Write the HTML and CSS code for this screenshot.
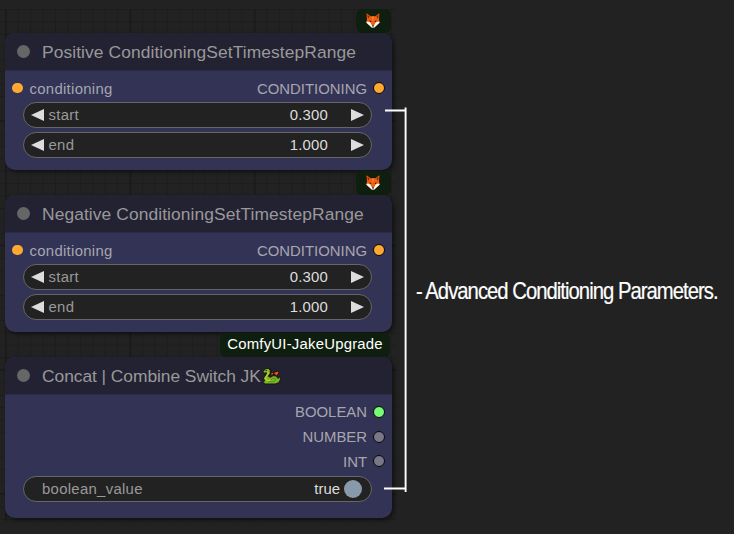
FILE: index.html
```html
<!DOCTYPE html>
<html lang="en">
<head>
<meta charset="utf-8">
<title>Advanced Conditioning Parameters</title>
<link rel="stylesheet" href="styles.css">
</head>
<body>
<svg class="defs" width="0" height="0" aria-hidden="true">
  <symbol id="fox" viewBox="0 0 14 15">
    <path d="M0.5 0.2 L4.6 3.2 H9.4 L13.4 0.2 L13 6.5 L13.8 9.6 L11 12 L8.4 14.6 H5.6 L3 12 L0.2 9.6 L1 6.5Z" fill="#f2600f"/>
    <path d="M1.4 1.8 L3.6 3.5 L2 6Z M12.6 1.8 L10.4 3.5 L12 6Z" fill="#7b2b12"/>
    <path d="M0.2 9.6 L1.8 8.4 L4.4 9.4 L5.6 12 H8.4 L9.6 9.4 L12.2 8.4 L13.8 9.6 L11 12 L8.4 14.6 H5.6 L3 12Z" fill="#fff"/>
    <path d="M3.4 7 L5.6 8.4 L4.3 9Z M10.6 7 L8.4 8.4 L9.7 9Z M5.8 12.3 H8.2 L7 14.2Z" fill="#111"/>
    <path d="M5.8 3.5 H8.2 L7 8Z" fill="#ff8425"/>
  </symbol>
  <symbol id="dragon" viewBox="0 0 18 17">
    <path d="M6 1 L8 1.8 L9 5 L8 8 L10.5 7.5 L11 5.2 L14.5 4 L16.4 5.2 L14.8 7 L13.8 8.6Z" fill="#f0501e" stroke="#111" stroke-width=".8"/>
    <path d="M1 4.2 L3.4 1.6 L6.3 1.3 L7.9 3.3 L7.6 6.3 L5.9 8.7 L8 9.8 L10.5 8.2 L13.5 8.6 L15.1 10.8 L17.3 9 L17.4 12 L15.7 14.9 L12.5 16 H3.4 L1 14.7 L2.5 13 L1.5 10.7 L4.2 6.5 L4.3 5.5 L1.8 5.8Z" fill="#80b526" stroke="#111" stroke-width=".8"/>
    <path d="M5 4.5 L6.2 5.5 L3 10.5 L4.8 12.8 L8 12.5" fill="none" stroke="#b5ce2b" stroke-width="1.3"/>
    <path d="M8.5 12.3 L10 10.8 L12.5 11 L13 12.5 L11 14 H6" fill="none" stroke="#4c8f1f" stroke-width=".9"/>
    <circle cx="4" cy="3.4" r=".6" fill="#111"/>
  </symbol>
</svg>
<main class="page">
  <section class="canvas">
    <div class="badge"><svg class="fox"><use href="#fox"/></svg></div>
    <article class="node">
      <header class="title"><i class="dot"></i><span class="name">Positive ConditioningSetTimestepRange</span></header>
      <div class="slots">
        <div class="slot"><i class="pin in"></i><span class="lower">conditioning</span><span class="out">CONDITIONING</span><i class="pin orange"></i></div>
      </div>
      <div class="widget"><i class="left"></i><span class="label">start</span><span class="value">0.300</span><i class="right"></i></div>
      <div class="widget"><i class="left"></i><span class="label">end</span><span class="value">1.000</span><i class="right"></i></div>
    </article>
    <div class="badge"><svg class="fox"><use href="#fox"/></svg></div>
    <article class="node">
      <header class="title"><i class="dot"></i><span class="name">Negative ConditioningSetTimestepRange</span></header>
      <div class="slots">
        <div class="slot"><i class="pin in"></i><span class="lower">conditioning</span><span class="out">CONDITIONING</span><i class="pin orange"></i></div>
      </div>
      <div class="widget"><i class="left"></i><span class="label">start</span><span class="value">0.300</span><i class="right"></i></div>
      <div class="widget"><i class="left"></i><span class="label">end</span><span class="value">1.000</span><i class="right"></i></div>
    </article>
    <div class="badge named"><span>ComfyUI-JakeUpgrade</span></div>
    <article class="node switch">
      <header class="title"><i class="dot"></i><span class="name">Concat | Combine Switch JK</span><svg class="dragon"><use href="#dragon"/></svg></header>
      <div class="slots">
        <div class="slot"><span class="out">BOOLEAN</span><i class="pin green"></i></div>
        <div class="slot"><span class="out">NUMBER</span><i class="pin gray"></i></div>
        <div class="slot"><span class="out">INT</span><i class="pin gray"></i></div>
      </div>
      <div class="widget toggle"><span class="label">boolean_value</span><span class="value">true</span><i class="knob"></i></div>
    </article>
  </section>
  <p class="note"><span>- Advanced Conditioning Parameters.</span></p>
  <svg class="bracket" width="24" height="386" viewBox="0 0 24 386"><path d="M1 3.5H22M0 381.5H22M21.6 0.5V385" fill="none" stroke="#fff" stroke-width="1.9"/></svg>
</main>
</body>
</html>
```
FILE: styles.css
```css
* { box-sizing: border-box; }
body {
  margin: 0;
  background: #222;
  font-family: "Liberation Sans", Arial, sans-serif;
  font-size: 14.9px;
  color: #a6a6ae;
}
.defs { display: block; height: 0; }
.page {
  position: relative;
  display: flex;
  width: 734px;
  height: 534px;
  padding-top: 9px;
  overflow: hidden;
}
.canvas {
  width: 396px;
  height: 512px;
  padding: 0 4px 0 5px;
  background-image:
    linear-gradient(90deg, #1b1b1b 2px, transparent 2px),
    linear-gradient(#1b1b1b 2px, transparent 2px),
    linear-gradient(90deg, #1d1d1d 1px, transparent 1px),
    linear-gradient(#1d1d1d 1px, transparent 1px);
  background-size: 124.4px 100%, 100% 124.4px, 12.44px 100%, 100% 12.44px;
  background-position: 5px 0, 0 111px, 5.2px 0, 0 0;
}
.badge {
  display: flex;
  align-items: center;
  justify-content: center;
  width: 35px;
  height: 24px;
  margin-left: 351px;
  border-radius: 6px;
  background: #0f1f0f;
}
.badge.named {
  width: 170px;
  margin-left: 215px;
  color: #fff;
  letter-spacing: .22px;
}
.badge.named span { padding-bottom: 3px; }
.fox { width: 14px; height: 15px; margin: -1px 2px 0 0; }
.dragon { width: 19px; height: 18px; margin: 1px 0 0 1px; }
.node {
  width: 387px;
  height: 137px;
  margin-bottom: 1px;
  border-radius: 10px;
  background: #335;
  box-shadow: 2px 2px 4px rgba(0, 0, 0, .5);
  overflow: hidden;
}
.node.switch { height: 161px; }
.title {
  display: flex;
  align-items: center;
  height: 38px;
  padding-left: 12px;
  background: #232233;
  border-bottom: 1px solid #2b2a44;
  color: #999;
  font-size: 17.4px;
}
.dot {
  width: 13px;
  height: 13px;
  margin-right: 12px;
  border-radius: 50%;
  background: #666;
}
.name { padding-top: 2px; letter-spacing: .09px; }
.switch .name { letter-spacing: -.05px; }
.slots { padding-top: 5px; }
.slot {
  display: flex;
  align-items: center;
  height: 25px;
  padding: 0 7px;
}
.switch .slot { height: 24.7px; }
.lower { margin-left: 7px; letter-spacing: .3px; }
.out { margin: 0 6px 0 auto; }
.pin {
  width: 12px;
  height: 12px;
  margin-top: -1px;
  border: 1.5px solid #080808;
  border-radius: 50%;
  background: #777788;
}
.pin.in { width: 10.5px; height: 10.5px; border: 0; background: #ffa931; }
.pin.orange { background: #ffa931; }
.pin.green { background: #7f7; }
.widget {
  display: flex;
  align-items: center;
  width: 349px;
  height: 26px;
  margin: 1px 0 4px 18px;
  padding: 0 7px;
  border: 1.3px solid #666;
  border-radius: 13px;
  background: #222;
  color: #999;
}
.left, .right {
  border: solid transparent;
  border-width: 6.5px 0;
}
.left { border-right: 13px solid #ddd; }
.right { border-left: 13px solid #ddd; }
.label { margin-left: 4.5px; letter-spacing: .3px; }
.value { margin: 0 23px 0 auto; color: #ddd; letter-spacing: .2px; }
.toggle { margin-top: 2px; }
.toggle .label { margin-left: 11px; }
.toggle .value { margin-right: 4px; letter-spacing: 0; }
.knob { width: 18px; height: 18px; margin-right: 2px; border-radius: 50%; background: #89a; }
.note {
  width: 310px;
  margin: 268px 0 0 20px;
  color: #fff;
  font-size: 24px;
  line-height: 27px;
  white-space: nowrap;
}
.note span {
  display: inline-block;
  letter-spacing: -1.15px;
  transform: scaleX(.844);
  transform-origin: left;
  -webkit-text-stroke: .2px #fff;
}
.bracket { position: absolute; left: 384px; top: 107px; }
```
